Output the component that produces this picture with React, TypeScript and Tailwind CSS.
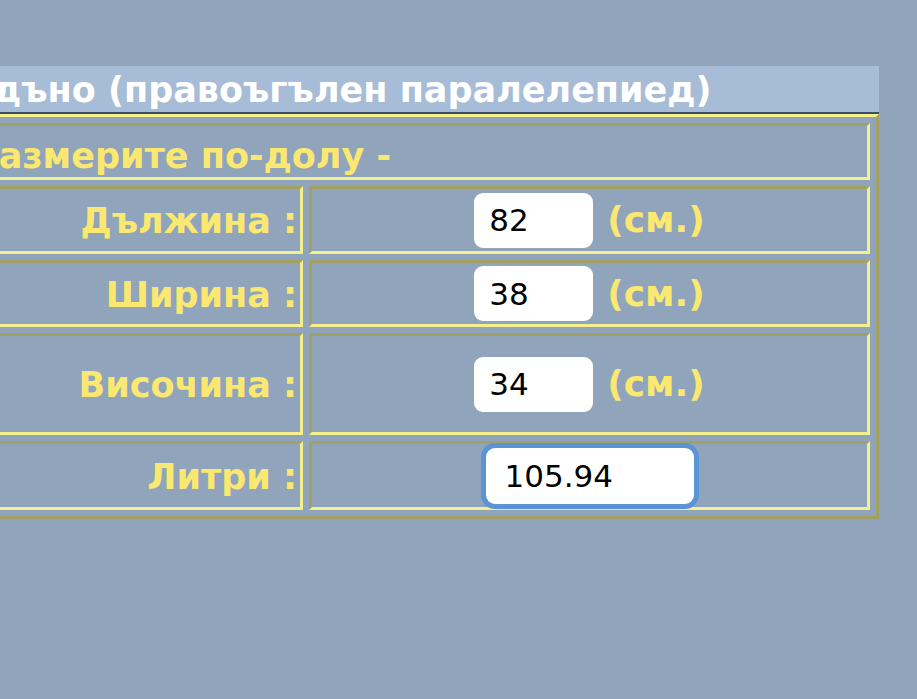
import React from "react";

const cell =
  "border-[3px] border-t-[#a3a064] border-l-[#a3a064] border-b-[#f6ef8d] border-r-[#f6ef8d]";
const label =
  cell + " flex items-center justify-end pr-[3px] pt-[3px] text-[35px] font-bold text-[#fbe870] leading-none";
const value = cell + " flex items-center justify-center gap-[14px]";

const rows = [
  { name: "Дължина :", val: "82", h: "h-[68px]" },
  { name: "Ширина :", val: "38", h: "h-[67px]" },
  { name: "Височина :", val: "34", h: "h-[102px]" },
];

export default function App() {
  return (
    <div className="h-screen w-full overflow-hidden bg-[#90a5bc] pt-[66px] font-['DejaVu_Sans',Verdana,sans-serif]">
      <div className="ml-[-36px] w-[915px] h-[48px] bg-[#a7bcd6] border-b-2 border-[#3c4c64] flex items-center pl-[29px] pt-[3px]">
        <span className="text-[35px] font-bold text-white leading-none whitespace-nowrap">
          дъно (правоъгълен паралелепиед)
        </span>
      </div>
      <div className="ml-[-36px] w-[915px] grid grid-cols-[330px_561px] gap-[6px] p-[6px] border-[3px] border-t-[#f6ef8d] border-l-[#f6ef8d] border-b-[#a3a064] border-r-[#a3a064]">
        <div className={cell + " col-span-2 h-[57px] flex items-center pl-[0px] pt-[9px] overflow-hidden"}>
          <span className="ml-[-3px] text-[35px] font-bold text-[#fbe870] leading-none whitespace-nowrap">
            Размерите по-долу -
          </span>
        </div>
        {rows.map((r) => (
          <React.Fragment key={r.name}>
            <div className={label + " " + r.h}>{r.name}</div>
            <div className={value + " " + r.h}>
              <input
                readOnly
                value={r.val}
                className="w-[119px] h-[55px] rounded-[9px] bg-white pl-[15px] text-[31px] text-black outline-none"
              />
              <span className="text-[36px] font-bold text-[#fbe870] leading-none">
                (см.)
              </span>
            </div>
          </React.Fragment>
        ))}
        <div className={label + " h-[69px]"}>Литри :</div>
        <div className={value + " h-[69px]"}>
          <input
            readOnly
            value="105.94"
            className="w-[208px] h-[56px] rounded-[9px] bg-white pl-[19px] text-[31px] text-black outline-none ring-[5px] ring-[#5b94d6]"
          />
        </div>
      </div>
    </div>
  );
}
